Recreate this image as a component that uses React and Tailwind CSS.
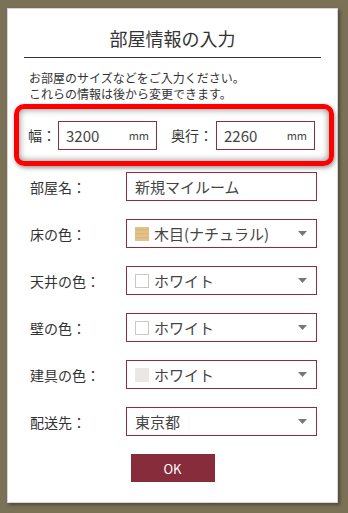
import { useState } from "react";

const FONT = "font-['Noto_Sans_CJK_JP','Noto_Sans',sans-serif]";

function Caret() {
  return (
    <svg className="w-[9px] h-[5px] shrink-0" viewBox="0 0 9 5">
      <path d="M0 0h9L4.5 5z" fill="#777" />
    </svg>
  );
}

function Swatch({ kind }) {
  if (kind === "wood") {
    return (
      <span className="w-[14px] h-[14px] shrink-0 bg-[repeating-linear-gradient(180deg,#e2c28a_0px,#e2c28a_2px,#d3ac6e_3px,#ead09c_4px)]" />
    );
  }
  if (kind === "fitting") {
    return <span className="w-[14px] h-[14px] shrink-0 bg-[#ebe7e3]" />;
  }
  return <span className="w-[14px] h-[14px] shrink-0 bg-white border border-[#c8c8c8]" />;
}

function SizeInput({ value }) {
  return (
    <div className="w-[99px] h-[29px] border border-[#8a2f3e] flex items-center justify-between pl-[7px] pr-[7px]">
      <span className="text-[15px] leading-none text-[#444]">{value}</span>
      <span className="text-[11px] leading-none text-[#444]">mm</span>
    </div>
  );
}

function Row({ label, children, select }) {
  return (
    <div className="flex items-center pl-[22px]">
      <span className="w-[96px] text-[14px] leading-none text-[#333]">{label}</span>
      <div className="w-[191px] h-[29px] border border-[#8a2f3e] flex items-center pl-[8px] pr-[9px]">
        <div className="flex-1 flex items-center gap-[5px] text-[15px] leading-none text-[#444]">
          {children}
        </div>
        {select && <Caret />}
      </div>
    </div>
  );
}

export default function App() {
  const [rows] = useState([
    { label: "床の色：", swatch: "wood", text: "木目(ナチュラル)" },
    { label: "天井の色：", swatch: "white", text: "ホワイト" },
    { label: "壁の色：", swatch: "white", text: "ホワイト" },
    { label: "建具の色：", swatch: "fitting", text: "ホワイト" },
  ]);

  return (
    <div className={`w-[348px] h-[513px] bg-[#7a7157] pl-[7px] pt-[8px] ${FONT}`}>
      <div className="w-[331px] h-[495px] bg-white border border-[#d4d4d4] shadow-[2px_2px_3px_rgba(0,0,0,0.35)] flex flex-col pt-[16px]">
        {/* Title */}
        <div className="mx-[16px] border-b border-[#333] pb-[6px]">
          <h2 className="text-center text-[18px] leading-[26px] text-[#333]">部屋情報の入力</h2>
        </div>

        <p className="mt-[12px] ml-[21px] text-[12px] leading-[16px] text-[#333]">
          お部屋のサイズなどをご入力ください。
          <br />
          これらの情報は後から変更できます。
        </p>

        {/* Highlighted size box */}
        <div className="mt-[2px] ml-[6px] w-[320px] h-[62px] border-[5px] border-[#ff0000] rounded-[10px] shadow-[inset_0_0_7px_rgba(0,0,0,0.5),1px_2px_4px_rgba(0,0,0,0.4)] flex items-center pl-[9px]">
          <span className="text-[14px] leading-none text-[#333] mr-[2px]">幅：</span>
          <SizeInput value="3200" />
          <span className="ml-[14px] text-[14px] leading-none text-[#333] mr-[3px]">奥行：</span>
          <SizeInput value="2260" />
        </div>

        {/* Fields */}
        <div className="mt-[6px] flex flex-col gap-[18px]">
          <Row label="部屋名：">
            <span>新規マイルーム</span>
          </Row>
          {rows.map((r) => (
            <Row key={r.label} label={r.label} select>
              <Swatch kind={r.swatch} />
              <span>{r.text}</span>
            </Row>
          ))}
          <Row label="配送先：" select>
            <span>東京都</span>
          </Row>
        </div>

        <div className="mt-[18px] flex justify-center">
          <button className="w-[84px] h-[28px] bg-[#872c3b] text-white text-[13px] leading-none">OK</button>
        </div>
      </div>
    </div>
  );
}
